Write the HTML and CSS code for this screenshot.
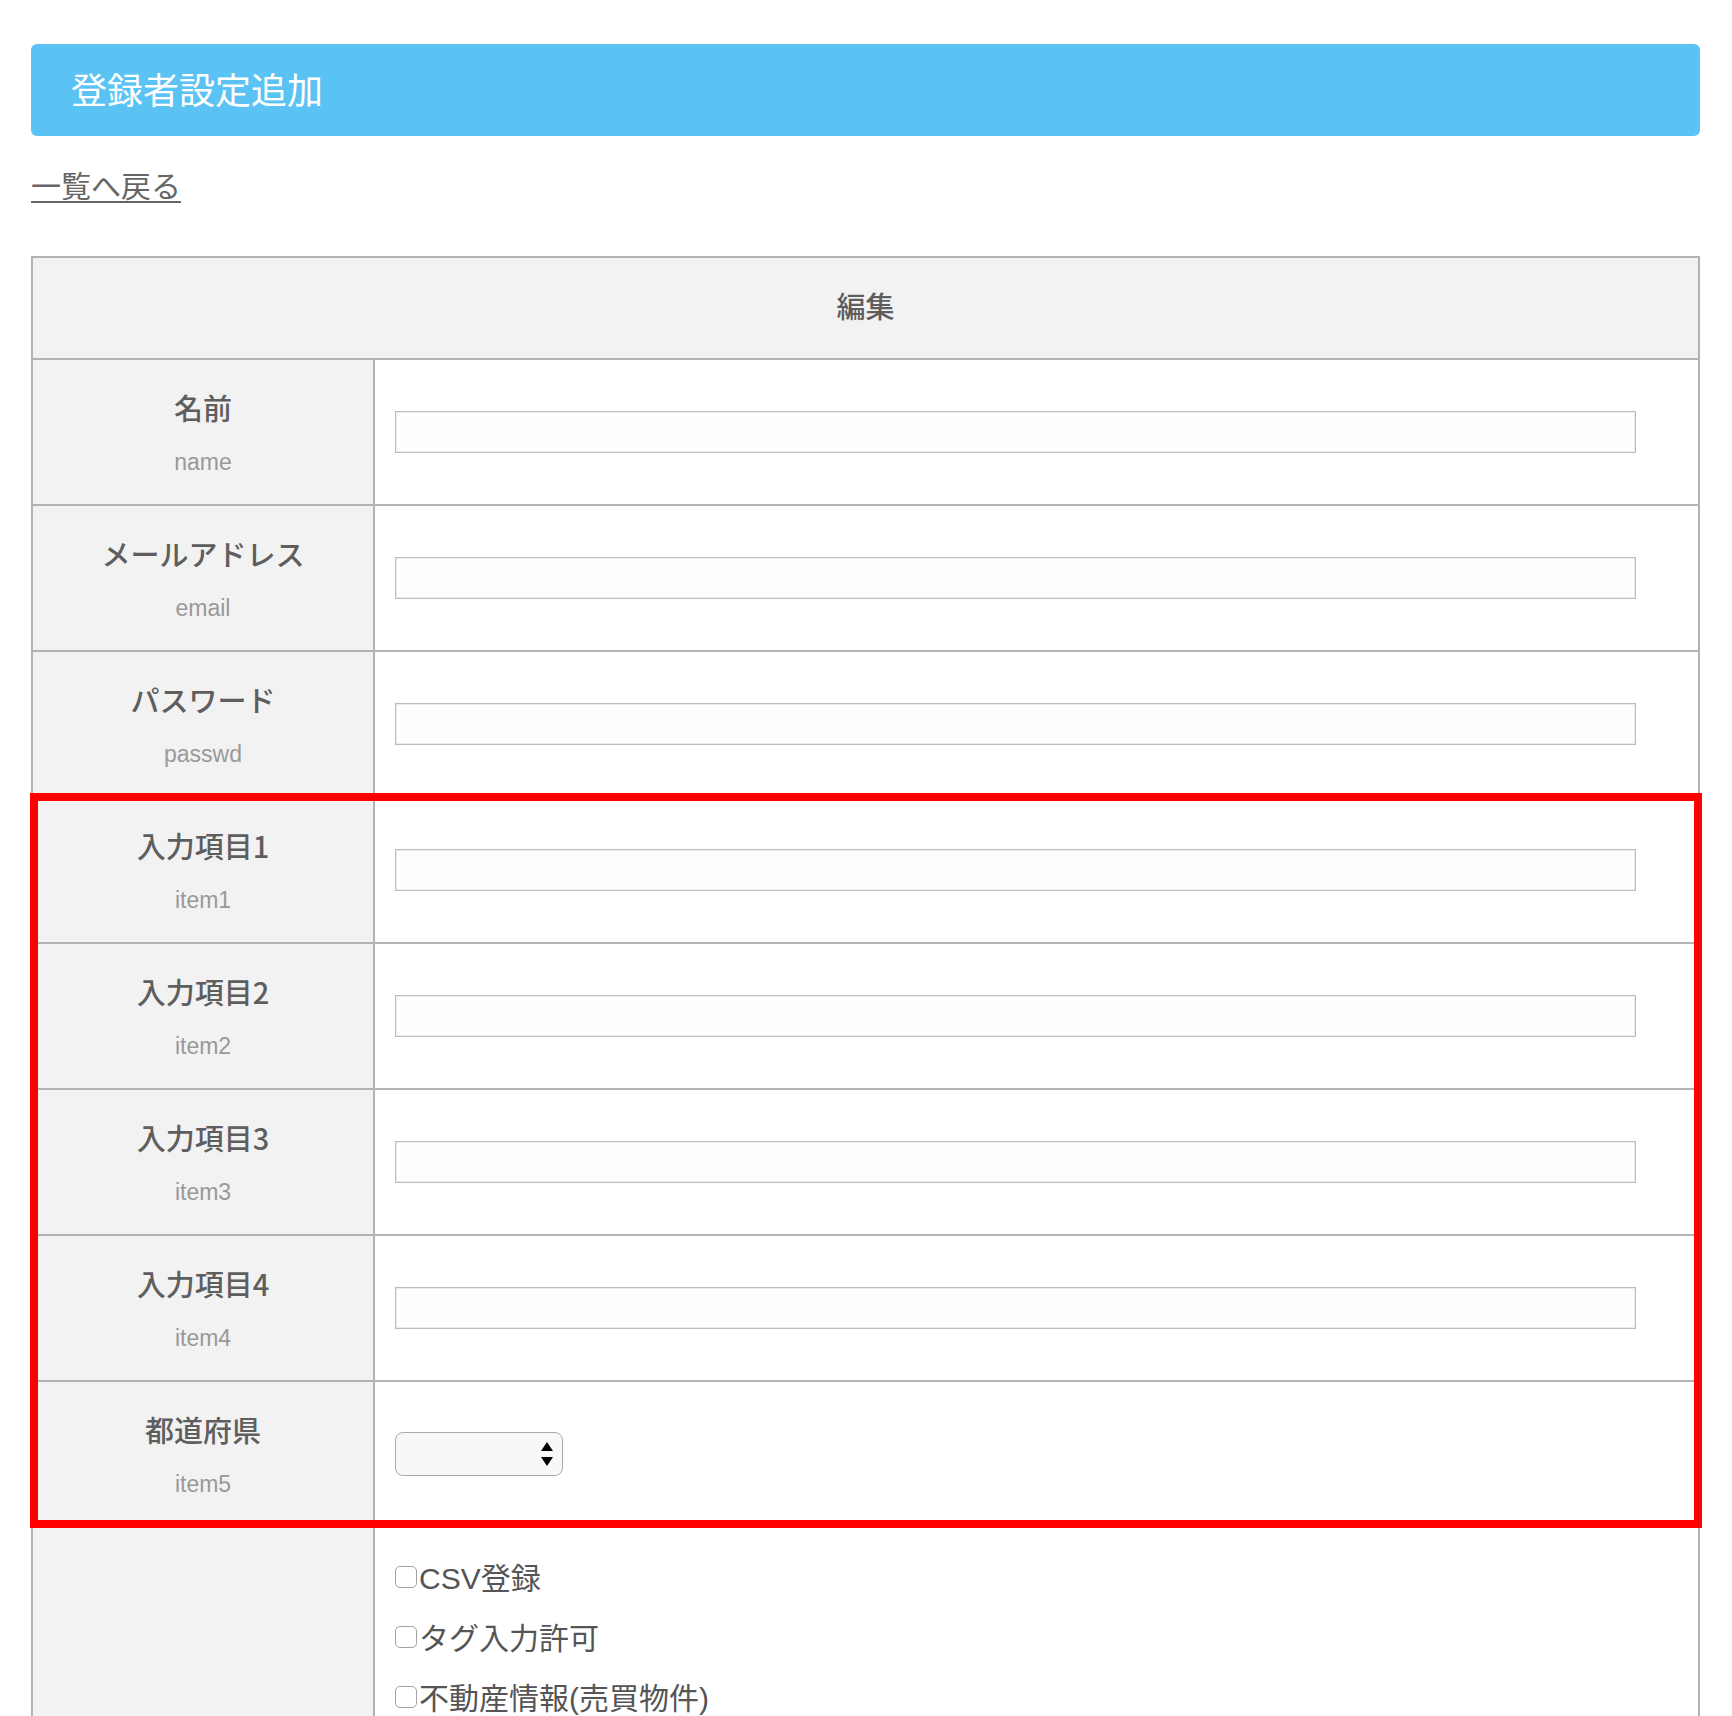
FILE: index.html
```html
<!DOCTYPE html>
<html lang="ja">
<head>
<meta charset="utf-8">
<title>登録者設定追加</title>
<link rel="stylesheet" href="styles.css">
</head>
<body>
<div class="page">
  <h1 class="banner">登録者設定追加</h1>
  <p class="back"><a href="#" class="back-link">一覧へ戻る</a></p>

  <div class="form">
    <div class="form-head">編集</div>

    <div class="row">
      <div class="label"><span class="label-main">名前</span><span class="label-sub">name</span></div>
      <div class="field"><input class="text-input" type="text"></div>
    </div>
    <div class="row">
      <div class="label"><span class="label-main">メールアドレス</span><span class="label-sub">email</span></div>
      <div class="field"><input class="text-input" type="text"></div>
    </div>
    <div class="row">
      <div class="label"><span class="label-main">パスワード</span><span class="label-sub">passwd</span></div>
      <div class="field"><input class="text-input" type="text"></div>
    </div>
    <div class="row">
      <div class="label"><span class="label-main">入力項目1</span><span class="label-sub">item1</span></div>
      <div class="field"><input class="text-input" type="text"></div>
    </div>
    <div class="row">
      <div class="label"><span class="label-main">入力項目2</span><span class="label-sub">item2</span></div>
      <div class="field"><input class="text-input" type="text"></div>
    </div>
    <div class="row">
      <div class="label"><span class="label-main">入力項目3</span><span class="label-sub">item3</span></div>
      <div class="field"><input class="text-input" type="text"></div>
    </div>
    <div class="row">
      <div class="label"><span class="label-main">入力項目4</span><span class="label-sub">item4</span></div>
      <div class="field"><input class="text-input" type="text"></div>
    </div>
    <div class="row">
      <div class="label"><span class="label-main">都道府県</span><span class="label-sub">item5</span></div>
      <div class="field">
        <div class="select-wrap">
          <select class="select"><option></option></select>
          <svg class="select-arrows" width="14" height="26" viewBox="0 0 14 26" aria-hidden="true">
            <path d="M7 1 L13 10 L1 10 Z" fill="#000"/>
            <path d="M1 16 L13 16 L7 25 Z" fill="#000"/>
          </svg>
        </div>
      </div>
    </div>
    <div class="row row-checks">
      <div class="label"></div>
      <div class="field field-checks">
        <label class="check"><input type="checkbox" class="checkbox">CSV登録</label>
        <label class="check"><input type="checkbox" class="checkbox">タグ入力許可</label>
        <label class="check"><input type="checkbox" class="checkbox">不動産情報(売買物件)</label>
      </div>
    </div>
  </div>

  <div class="highlight"></div>
</div>
</body>
</html>
```

FILE: styles.css
```css
html, body {
  margin: 0;
  padding: 0;
  background: #ffffff;
}

body {
  font-family: "Liberation Sans", "Noto Sans CJK JP", sans-serif;
  color: #666666;
}

.page {
  position: relative;
  padding: 44px 32px 0 31px;
}

.banner {
  margin: 0;
  height: 92px;
  box-sizing: border-box;
  display: flex;
  align-items: center;
  padding: 4px 0 0 40px;
  background: #5bc3f3;
  border-radius: 6px;
  color: #ffffff;
  font-size: 36px;
  font-weight: 400;
  line-height: 1;
}

.back {
  margin: 28px 0 47px;
  font-size: 30px;
  line-height: 45px;
}

.back-link {
  color: #666666;
  text-decoration: underline;
  text-decoration-thickness: 2px;
  text-underline-offset: 4px;
}

.form {
  width: 1669px;
  box-sizing: border-box;
  border: 2px solid #b3b3b3;
  border-bottom: none;
}

.form-head {
  height: 100px;
  box-sizing: border-box;
  padding-bottom: 6px;
  display: flex;
  align-items: center;
  justify-content: center;
  background: #f2f2f2;
  font-family: "Noto Sans CJK JP", sans-serif;
  font-size: 29px;
  font-weight: 500;
  color: #5e5e5e;
}

.row {
  display: grid;
  grid-template-columns: 342px 1fr;
  border-top: 2px solid #b3b3b3;
  min-height: 144px;
}

.label {
  background: #f2f2f2;
  border-right: 2px solid #b3b3b3;
  display: flex;
  flex-direction: column;
  align-items: center;
  justify-content: center;
  text-align: center;
  padding-bottom: 5px;
}

.label-main {
  font-family: "Noto Sans CJK JP", sans-serif;
  font-size: 29px;
  font-weight: 500;
  line-height: 48px;
  color: #5e5e5e;
}

.label-sub {
  font-size: 23px;
  line-height: 30px;
  margin-top: 16px;
  color: #999999;
}

.field {
  display: flex;
  align-items: center;
  padding-left: 20px;
  background: #ffffff;
}

.text-input {
  width: 1241px;
  height: 42px;
  box-sizing: border-box;
  margin: 0;
  border: 1px solid #bdbdbd;
  box-shadow: inset 0 0 0 1px #ececec;
  background: #fefefe;
  border-radius: 0;
  outline: none;
  font-size: 22px;
}

.select-wrap {
  position: relative;
  width: 168px;
  height: 44px;
}

.select {
  -webkit-appearance: none;
  appearance: none;
  width: 168px;
  height: 44px;
  box-sizing: border-box;
  margin: 0;
  border: 1.5px solid #a9a9a9;
  border-radius: 8px;
  background: #f8f8f8;
  font-size: 22px;
}

.select-arrows {
  position: absolute;
  right: 9px;
  top: 9px;
  pointer-events: none;
}

.row-checks {
  min-height: 190px;
}

.field-checks {
  flex-direction: column;
  align-items: flex-start;
  justify-content: flex-start;
  padding-top: 18px;
}

.check {
  display: flex;
  align-items: center;
  height: 60px;
  font-size: 30px;
  color: #555555;
}

.checkbox {
  -webkit-appearance: none;
  appearance: none;
  width: 22px;
  height: 22px;
  box-sizing: border-box;
  margin: 2px 2px 0 0;
  border: 1.5px solid #a3a3a3;
  border-radius: 5px;
  background: #ffffff;
}

.highlight {
  position: absolute;
  top: 793px;
  left: 30px;
  width: 1672px;
  height: 735px;
  box-sizing: border-box;
  border: 8px solid #ff0000;
  pointer-events: none;
}
```
